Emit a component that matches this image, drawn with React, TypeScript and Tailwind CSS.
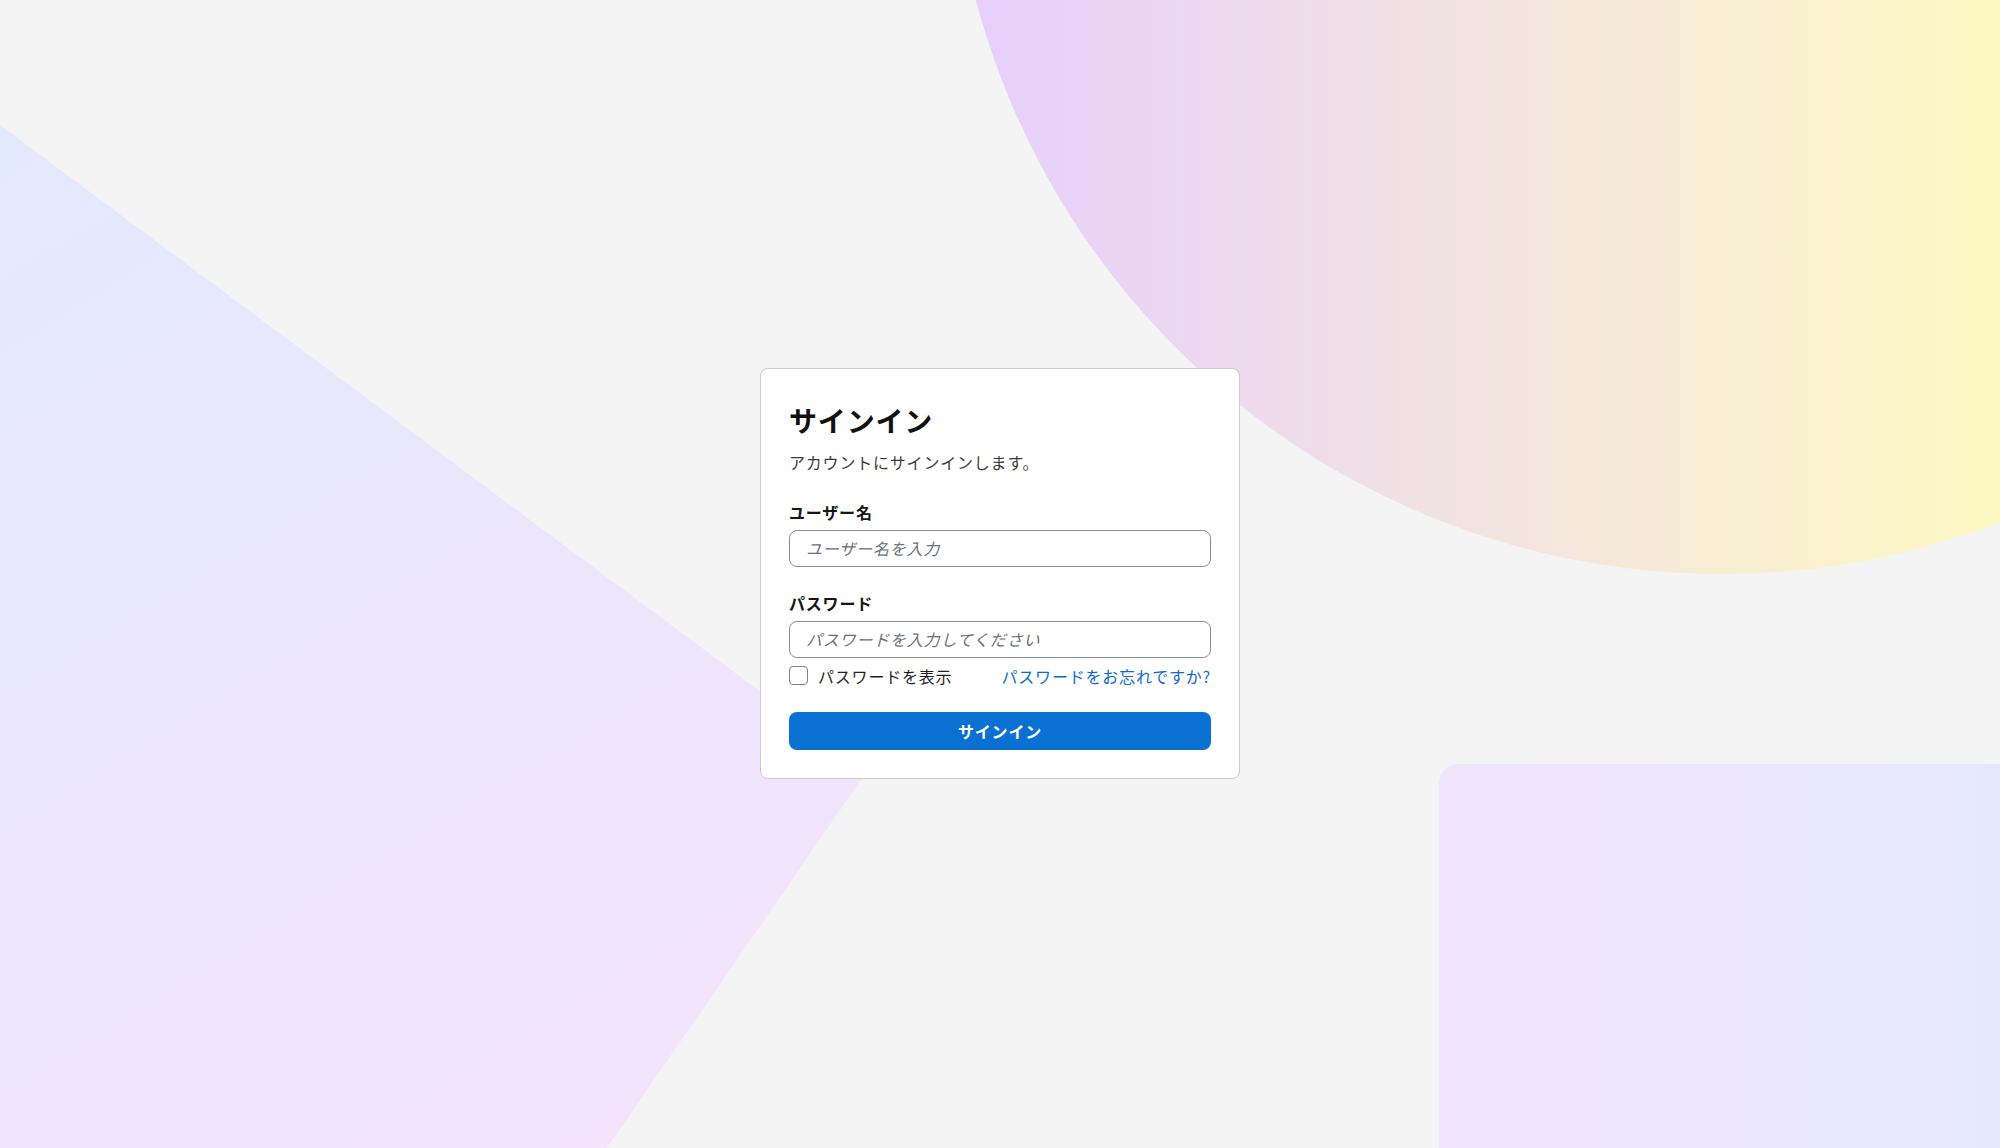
import { useState } from "react";

function Backdrop() {
  return (
    <svg
      className="absolute inset-0 h-full w-full"
      viewBox="0 0 2000 1148"
      preserveAspectRatio="none"
      aria-hidden="true"
    >
      <defs>
        <linearGradient id="orb" gradientUnits="userSpaceOnUse" x1="960" y1="0" x2="2000" y2="0">
          <stop offset="0" stopColor="#e6cffd" />
          <stop offset="1" stopColor="#fef8c3" />
        </linearGradient>
        <linearGradient id="kite" gradientUnits="userSpaceOnUse" x1="0" y1="140" x2="620" y2="1140">
          <stop offset="0" stopColor="#e3e9fd" />
          <stop offset="1" stopColor="#f3e4fc" />
        </linearGradient>
        <linearGradient id="slab" gradientUnits="userSpaceOnUse" x1="1439" y1="0" x2="2000" y2="0">
          <stop offset="0" stopColor="#f1e4fc" />
          <stop offset="1" stopColor="#e5e8fd" />
        </linearGradient>
      </defs>
      <circle cx="1722" cy="-198" r="772" fill="url(#orb)" />
      <polygon points="0,125 867,771 607,1148 0,1148" fill="url(#kite)" />
      <path d="M1439 1148 V784 a20 20 0 0 1 20 -20 H2000 V1148 Z" fill="url(#slab)" />
    </svg>
  );
}

export default function App() {
  const [show, setShow] = useState(false);

  return (
    <div
      className="relative flex min-h-screen items-center justify-center overflow-hidden bg-[#f4f4f4]"
      style={{ fontFamily: '"Noto Sans CJK JP", "Noto Sans", sans-serif' }}
    >
      <Backdrop />

      <div className="relative z-10 -mt-[2px] flex w-[480px] flex-col rounded-lg border border-[#c9cbd1] bg-white px-7 pt-7 pb-7">
        <h1 className="mt-[5px] text-[28px] leading-[36px] font-bold tracking-[0.03em] text-[#111111]">サインイン</h1>
        <p className="mt-3 text-base leading-6 tracking-[0.05em] text-[#3b3b3b]">アカウントにサインインします。</p>

        <label className="mt-[26px] text-base leading-6 font-semibold tracking-[0.05em] text-[#161616]">ユーザー名</label>
        <input
          type="text"
          placeholder="ユーザー名を入力"
          className="mt-1.5 h-[37px] rounded-lg border border-[#8a8f98] px-4 text-base tracking-[0.05em] text-[#222] outline-none placeholder:text-[#6d7079] placeholder:italic"
        />

        <label className="mt-6 text-base leading-6 font-semibold tracking-[0.05em] text-[#161616]">パスワード</label>
        <input
          type={show ? "text" : "password"}
          placeholder="パスワードを入力してください"
          className="mt-1.5 h-[37px] rounded-lg border border-[#8a8f98] px-4 text-base tracking-[0.05em] text-[#222] outline-none placeholder:text-[#6d7079] placeholder:italic"
        />

        <div className="mt-1.5 flex h-6 items-center justify-between">
          <label className="flex items-center gap-2.5 text-base leading-6 tracking-[0.05em] text-[#1f1f1f]">
            <input
              type="checkbox"
              checked={show}
              onChange={(e) => setShow(e.target.checked)}
              className="h-[19px] w-[19px] appearance-none rounded-[4px] border border-[#7c818a] bg-white"
            />
            パスワードを表示
          </label>
          <a href="#" className="text-base leading-6 tracking-[0.05em] text-[#0b6bcf]">
            パスワードをお忘れですか?
          </a>
        </div>

        <button className="mt-6 h-[38px] rounded-lg bg-[#0a71d3] text-base font-bold tracking-[0.05em] text-white">
          サインイン
        </button>
      </div>
    </div>
  );
}
